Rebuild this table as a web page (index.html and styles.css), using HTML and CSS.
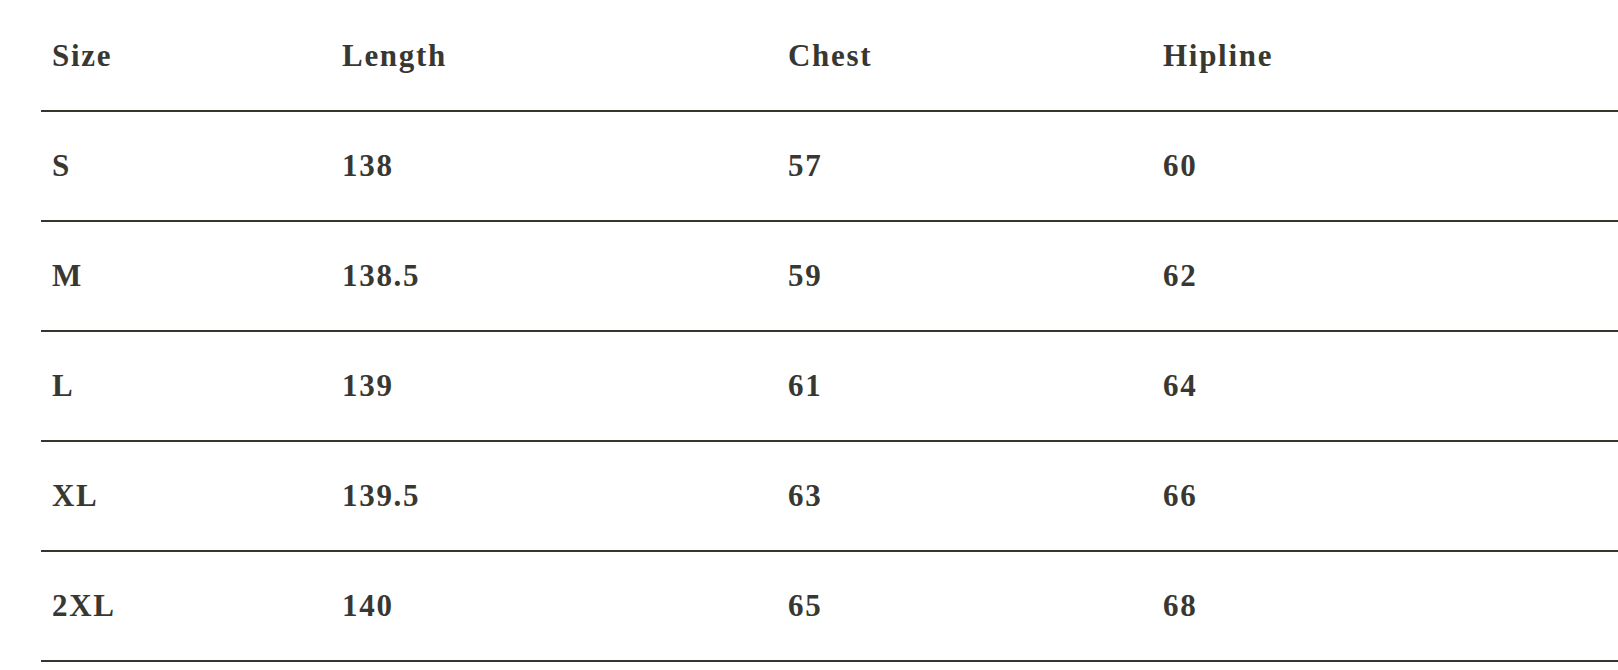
FILE: index.html
```html
<!DOCTYPE html>
<html>
<head>
<meta charset="utf-8">
<link rel="stylesheet" href="styles.css">
</head>
<body>
<div class="wrap">
<table class="size-table">
  <colgroup>
    <col class="c1"><col class="c2"><col class="c3"><col class="c4">
  </colgroup>
  <thead>
    <tr><th>Size</th><th>Length</th><th>Chest</th><th>Hipline</th></tr>
  </thead>
  <tbody>
    <tr><td>S</td><td>138</td><td>57</td><td>60</td></tr>
    <tr><td>M</td><td>138.5</td><td>59</td><td>62</td></tr>
    <tr><td>L</td><td>139</td><td>61</td><td>64</td></tr>
    <tr><td>XL</td><td>139.5</td><td>63</td><td>66</td></tr>
    <tr><td>2XL</td><td>140</td><td>65</td><td>68</td></tr>
  </tbody>
</table>
</div>
</body>
</html>
```

FILE: styles.css
```css
html, body {
  margin: 0;
  padding: 0;
  background: #ffffff;
  overflow: hidden;
}

.wrap {
  padding-left: 41px;
  padding-top: 2px;
}

.size-table {
  width: 1577px;
  border-collapse: collapse;
  table-layout: fixed;
  font-family: "Liberation Serif", "Times New Roman", serif;
  font-weight: 700;
  font-size: 31px;
  letter-spacing: 1.7px;
  color: #383833;
}

.c1 { width: 290px; }
.c2 { width: 446px; }
.c3 { width: 375px; }

.size-table th,
.size-table td {
  height: 108px;
  padding: 0 0 0 11px;
  text-align: left;
  vertical-align: middle;
  border-bottom: 2px solid #36362f;
  font-weight: 700;
}
```
